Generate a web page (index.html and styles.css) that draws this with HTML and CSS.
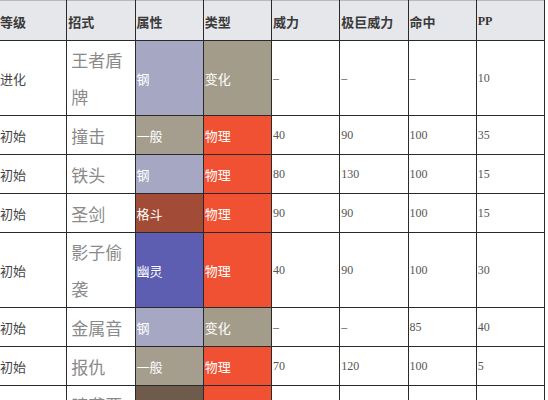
FILE: index.html
```html
<!DOCTYPE html>
<html lang="zh">
<head>
<meta charset="utf-8">
<link rel="stylesheet" href="styles.css">
</head>
<body>
<table class="moves">
  <thead>
    <tr>
      <th>等级</th><th>招式</th><th>属性</th><th>类型</th><th>威力</th><th>极巨威力</th><th>命中</th><th class="en">PP</th>
    </tr>
  </thead>
  <tbody>
    <tr>
      <td>进化</td><td class="name">王者盾牌</td><td class="t steel">钢</td><td class="t status">变化</td><td class="num">–</td><td class="num">–</td><td class="num">–</td><td class="num">10</td>
    </tr>
    <tr>
      <td>初始</td><td class="name">撞击</td><td class="t normal">一般</td><td class="t phys">物理</td><td class="num">40</td><td class="num">90</td><td class="num">100</td><td class="num">35</td>
    </tr>
    <tr>
      <td>初始</td><td class="name">铁头</td><td class="t steel">钢</td><td class="t phys">物理</td><td class="num">80</td><td class="num">130</td><td class="num">100</td><td class="num">15</td>
    </tr>
    <tr>
      <td>初始</td><td class="name">圣剑</td><td class="t fight">格斗</td><td class="t phys">物理</td><td class="num">90</td><td class="num">90</td><td class="num">100</td><td class="num">15</td>
    </tr>
    <tr>
      <td>初始</td><td class="name">影子偷袭</td><td class="t ghost">幽灵</td><td class="t phys">物理</td><td class="num">40</td><td class="num">90</td><td class="num">100</td><td class="num">30</td>
    </tr>
    <tr>
      <td>初始</td><td class="name">金属音</td><td class="t steel">钢</td><td class="t status">变化</td><td class="num">–</td><td class="num">–</td><td class="num">85</td><td class="num">40</td>
    </tr>
    <tr>
      <td>初始</td><td class="name">报仇</td><td class="t normal">一般</td><td class="t phys">物理</td><td class="num">70</td><td class="num">120</td><td class="num">100</td><td class="num">5</td>
    </tr>
    <tr>
      <td>初始</td><td class="name">暗袭要害</td><td class="t dark">恶</td><td class="t phys">物理</td><td class="num">70</td><td class="num">120</td><td class="num">100</td><td class="num">15</td>
    </tr>
  </tbody>
</table>
</body>
</html>
```
FILE: styles.css
```css
html, body {
  margin: 0;
  padding: 0;
  background: #ffffff;
}

.moves {
  margin-left: -2px;
  width: 547px;
  border-collapse: collapse;
  table-layout: fixed;
  font-family: "Noto Sans CJK SC", "Noto Sans", sans-serif;
  font-size: 13px;
  color: #444;
}

.moves th,
.moves td {
  border: 1px solid #2a2a2a;
  padding: 0 1px;
  text-align: left;
  vertical-align: middle;
  overflow: hidden;
  white-space: normal;
}

.moves thead th {
  height: 37px;
  background: #e6e7eb;
  font-weight: bold;
  color: #3a3a3a;
  border-top-color: #b8b8b8;
  padding-top: 2px;
}

.moves th.en {
  font-family: "Liberation Serif", serif;
  font-size: 12px;
  font-weight: bold;
  color: #333;
}

.moves td {
  height: 38px;
}

.moves td.name {
  font-size: 17px;
  line-height: 37px;
  color: #8a8a8a;
  padding-left: 4px;
  word-break: break-all;
}

.moves td.t {
  color: #ffffff;
}

.moves td.num {
  font-family: "Liberation Serif", serif;
  font-size: 12px;
  color: #555;
}

.steel { background: #a6a8c3; }
.normal { background: #a59e8e; }
.status { background: #a39c8b; }
.phys { background: #ef5132; }
.fight { background: #a24b37; }
.ghost { background: #5d5eb1; }
.dark { background: #6f5b4b; }
```
